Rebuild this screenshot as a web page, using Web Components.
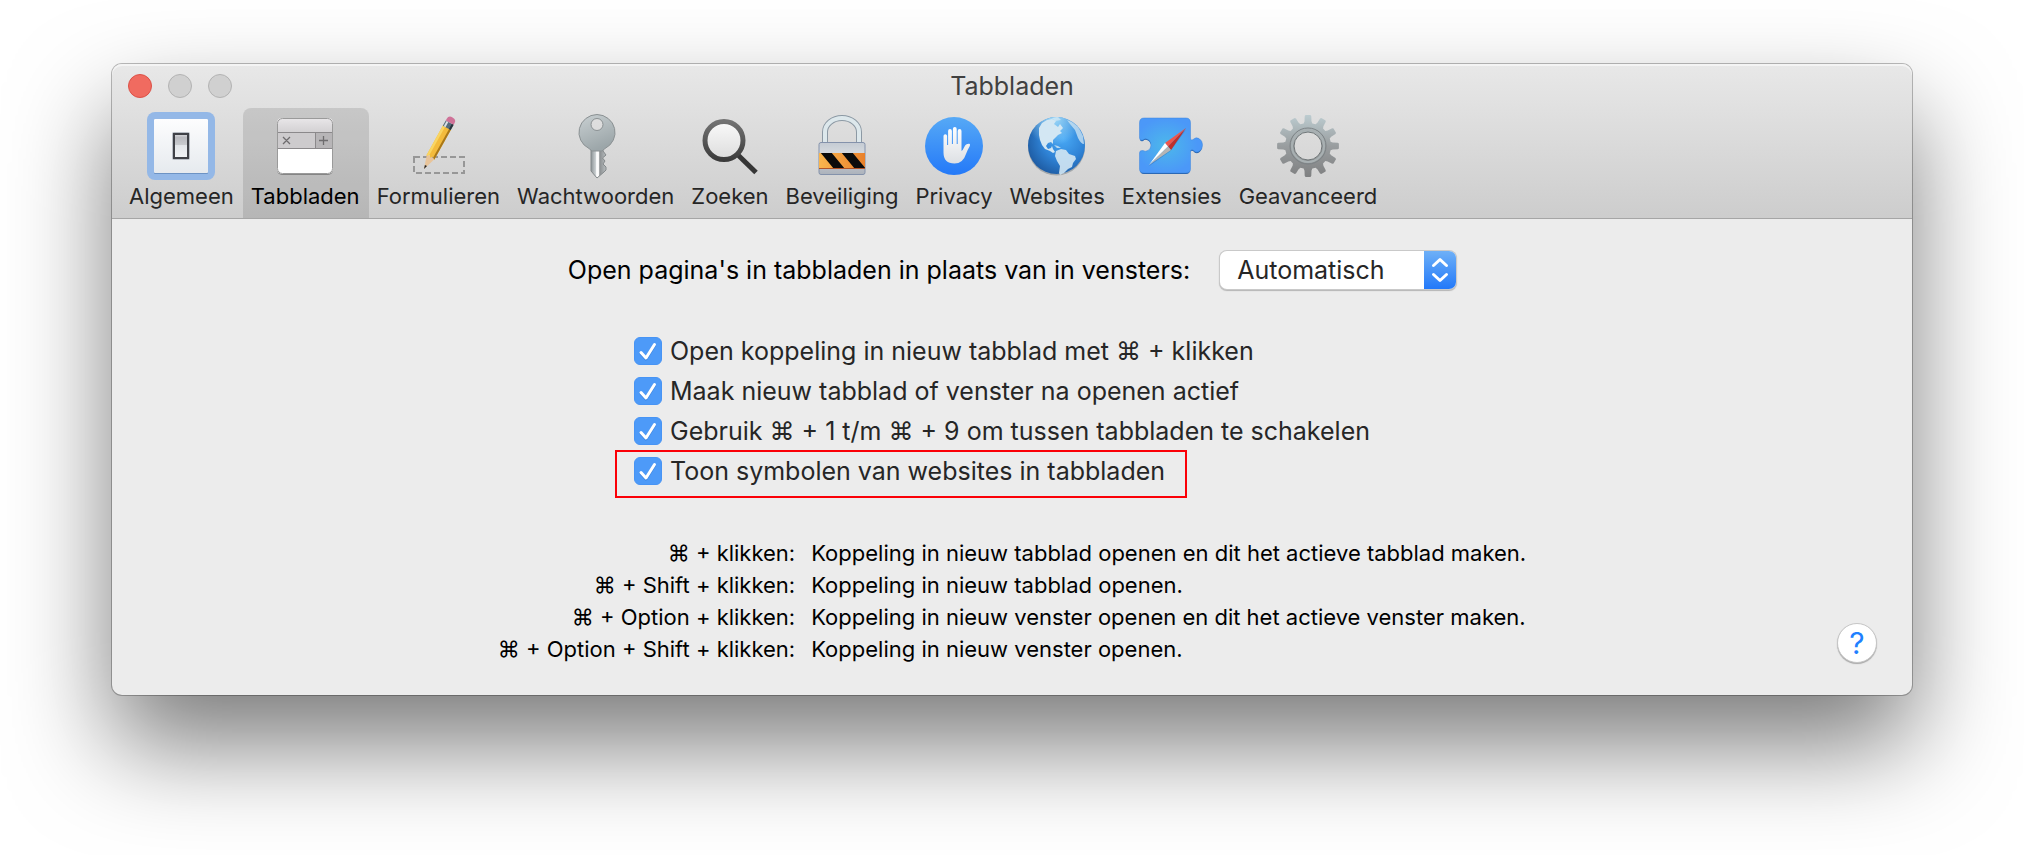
<!DOCTYPE html>
<html lang="nl">
<head>
<meta charset="utf-8">
<title>Tabbladen</title>
<style>
  body {
    margin: 0;
    padding: 64px 112px 160px;
    background: #fff;
    font-family: Inter, 'Open Sans', sans-serif;
    font-size: 25px;
    color: #262626;
  }
</style>
</head>
<body>

<prefs-window heading="Tabbladen">
  <toolbar-item slot="toolbar">
    <svg slot="icon" viewBox="0 0 64 64">
      <defs>
        <linearGradient id="plate" x2="0" y2="1"><stop stop-color="#fdfdfe"/><stop offset="1" stop-color="#e6eaee"/></linearGradient>
        <linearGradient id="rocker" x2="0" y2="1"><stop stop-color="#dcdde0"/><stop offset=".15" stop-color="#b9babf"/><stop offset=".45" stop-color="#c9cbcf"/><stop offset=".48" stop-color="#e3e6ea"/><stop offset="1" stop-color="#f1f3f5"/></linearGradient>
      </defs>
      <rect x="-2" y="-1" width="68" height="68" rx="8" fill="#94b8e7"/>
      <rect x="5" y="6" width="54" height="55" rx="1" fill="#6d93c4"/>
      <rect x="5" y="6" width="54" height="54" rx="1" fill="url(#plate)"/>
      <rect x="23" y="19" width="18" height="28" rx="2" fill="#b9bec5"/>
      <rect x="25" y="21" width="14" height="24" fill="url(#rocker)" stroke="#3f4147" stroke-width="2"/>
    </svg>
    Algemeen
  </toolbar-item>

  <toolbar-item slot="toolbar" selected>
    <svg slot="icon" viewBox="0 0 64 64">
      <defs>
        <linearGradient id="bar" x2="0" y2="1"><stop stop-color="#e9e7e9"/><stop offset="1" stop-color="#d3d1d3"/></linearGradient>
        <clipPath id="page"><rect x="4" y="5" width="56" height="56" rx="5"/></clipPath>
      </defs>
      <rect x="4" y="6" width="56" height="56" rx="5" fill="#858585"/>
      <g clip-path="url(#page)">
        <rect x="4" y="5" width="56" height="56" fill="#fff"/>
        <rect x="4" y="5" width="56" height="14" fill="url(#bar)"/>
        <rect x="4" y="19" width="56" height="17" fill="#cdcbcd"/>
        <rect x="43" y="19" width="17" height="17" fill="#b7b5b7"/>
        <path d="M4 19.500H60M4 35.500H60M42.500 19V36" stroke="#8b898b"/>
      </g>
      <rect x="4.500" y="5.500" width="55" height="55" rx="5" fill="none" stroke="#9a9a9a"/>
      <path d="M10 24l7 7M17 24l-7 7M46 27.500h9M50.500 23v9" stroke="#6e6c6e" stroke-width="1.300"/>
    </svg>
    Tabbladen
  </toolbar-item>

  <toolbar-item slot="toolbar">
    <svg slot="icon" viewBox="0 0 64 64">
      <rect x="8" y="44" width="50" height="16" fill="none" stroke="#979797" stroke-width="2" stroke-dasharray="6 3"/>
      <g transform="translate(18 56) rotate(29)">
        <path d="M0 0L-4.500 -14H4.500Z" fill="#e8c49a"/>
        <path d="M0 0L-1.200 -4H1.200Z" fill="#222"/>
        <path d="M-4.500 -13L-4.500 -48H4.500V-13L2 -15L0 -13L-2 -15Z" fill="#f3bb3c"/>
        <path d="M-4.500 -13V-48H-2V-14.500Z" fill="#f9d562"/>
        <path d="M4.500 -13V-48H2.500V-14.500Z" fill="#a87719"/>
        <rect x="-4.500" y="-53" width="9" height="6" fill="#556b7b"/>
        <path d="M-2.500 -53V-47" stroke="#d9e1e5" stroke-width="2"/>
        <path d="M3.500 -53V-47" stroke="#28343c" stroke-width="2"/>
        <path d="M-4.500 -53V-55Q-4.500 -59 0 -59T4.500 -55V-53Z" fill="#cf7298"/>
      </g>
    </svg>
    Formulieren
  </toolbar-item>

  <toolbar-item slot="toolbar">
    <svg slot="icon" viewBox="0 0 64 64">
      <defs>
        <linearGradient id="key" x2=".4" y2="1"><stop stop-color="#c9d0d2"/><stop offset="1" stop-color="#9ca6a9"/></linearGradient>
        <linearGradient id="blade"><stop stop-color="#8c9396"/><stop offset=".3" stop-color="#c9ced0"/><stop offset=".38" stop-color="#fff"/><stop offset=".52" stop-color="#f6f6f6"/><stop offset=".58" stop-color="#8b8f91"/><stop offset="1" stop-color="#b8bdbf"/></linearGradient>
      </defs>
      <path d="M27 36V58L33 65L40 59L42 57L42 54L39 51L41 48L38.500 45L42 42L39 38V36Z" fill="url(#blade)" stroke="#84898b"/>
      <path d="M33 1.500A18.500 18 0 0 1 41 35.500L38 38H28L25 35.500A18.500 18 0 0 1 33 1.500ZM33 5.500A6 6 0 0 0 33 17.500A6 6 0 0 0 33 5.500Z" fill="url(#key)" stroke="#8b9193" fill-rule="evenodd"/>
    </svg>
    Wachtwoorden
  </toolbar-item>

  <toolbar-item slot="toolbar">
    <svg slot="icon" viewBox="0 0 64 64">
      <defs>
        <linearGradient id="lens" x2="0" y2="1"><stop stop-color="#fafafa"/><stop offset="1" stop-color="#dcdcdc"/></linearGradient>
        <linearGradient id="rim" x2="0" y2="1"><stop stop-color="#737373"/><stop offset="1" stop-color="#3c3c3c"/></linearGradient>
      </defs>
      <path d="M40 42L58 59.500" stroke="#363636" stroke-width="5"/>
      <circle cx="26" cy="27.500" r="19" fill="url(#lens)" stroke="url(#rim)" stroke-width="5"/>
    </svg>
    Zoeken
  </toolbar-item>

  <toolbar-item slot="toolbar">
    <svg slot="icon" viewBox="0 0 64 64">
      <defs>
        <linearGradient id="steel" x2="0" y2="1"><stop stop-color="#c4cbd3"/><stop offset=".3" stop-color="#d4d8dd"/><stop offset="1" stop-color="#acb2bb"/></linearGradient>
        <linearGradient id="tape"><stop stop-color="#f9b54e"/><stop offset="1" stop-color="#e9812b"/></linearGradient>
        <clipPath id="band"><rect x="9" y="40" width="46" height="15"/></clipPath>
      </defs>
      <path d="M15 30V19A17 14 0 0 1 49 19V30" fill="none" stroke="#8c99a4" stroke-width="6"/>
      <path d="M15 30V19A17 14 0 0 1 49 19V30" fill="none" stroke="#dde8ec" stroke-width="4"/>
      <rect x="9" y="29.500" width="46" height="32" rx="2" fill="url(#steel)" stroke="#8492ab"/>
      <rect x="9" y="40" width="46" height="15" fill="url(#tape)"/>
      <path clip-path="url(#band)" d="M10 39H21L35 56H24ZM31 39H42L56 56H45Z" fill="#0b0b0b"/>
      <path d="M9 55.500H55" stroke="#b0552a"/>
    </svg>
    Beveiliging
  </toolbar-item>

  <toolbar-item slot="toolbar">
    <svg slot="icon" viewBox="0 0 64 64">
      <defs>
        <linearGradient id="disc" x2="0" y2="1"><stop stop-color="#56a9f6"/><stop offset="1" stop-color="#2479f8"/></linearGradient>
        <linearGradient id="palm" x2="0" y2="1"><stop stop-color="#fff"/><stop offset="1" stop-color="#dde0e4"/></linearGradient>
      </defs>
      <circle cx="32" cy="33" r="29" fill="url(#disc)"/>
      <path d="M21.500 23a1.800 1.800 0 0 1 3.600 0v9h1V18a1.900 1.900 0 0 1 3.800 0v13h1V16a1.900 1.900 0 0 1 3.800 0v15h1V18a1.900 1.900 0 0 1 3.800 0v20q1.500-1 2.800-4q1.600-3.500 5-3.200q1.300.4.500 2.200q-1.800 3-3.800 8q-3 9.500-11.500 9.500q-11 0-11-11Z" fill="url(#palm)"/>
    </svg>
    Privacy
  </toolbar-item>

  <toolbar-item slot="toolbar">
    <svg slot="icon" viewBox="0 0 64 64">
      <defs>
        <radialGradient id="sea" cx=".62" cy=".38" r=".68"><stop stop-color="#49a9f5"/><stop offset=".55" stop-color="#2f83d6"/><stop offset="1" stop-color="#1e5ba2"/></radialGradient>
        <radialGradient id="shine" cx=".45" cy="0" r=".5"><stop stop-color="#a7e0fb"/><stop offset="1" stop-color="#a7e0fb" stop-opacity="0"/></radialGradient>
      </defs>
      <circle cx="31.500" cy="34" r="28.500" fill="#a4a8ab"/>
      <circle cx="31.500" cy="32.500" r="28.500" fill="url(#sea)"/>
      <circle cx="31.500" cy="32.500" r="28.500" fill="url(#shine)"/>
      <g fill="#d3e7f3">
        <path d="M17 10L22 7L27 6L31 8L29 11L33 14L35 11L38 15L35 18L37 20L33 22L30 25L28 27L28 31L26 29L23 30L21 33L23 36L26 35L27 33L28 36L30 39L28 40L25 38L20 36L17 32L15 27L14 22L14 15Z"/>
        <path d="M27 5L33 4L36 7L30 8ZM42 7Q53 10 58 23L59 31Q56 31 53 25L50 17L45 11Z" opacity=".75"/>
        <path d="M29 32L33 33L36 35L32 35Z" opacity=".8"/>
        <path d="M31 38L36 36L41 37L44 41L50 43L51 46L48 50L47 54L43 56L39 60L35 62L34 60L35 53L32 48L30 43Z" opacity=".9"/>
      </g>
    </svg>
    Websites
  </toolbar-item>

  <toolbar-item slot="toolbar">
    <svg slot="icon" viewBox="0 0 64 64">
      <defs><radialGradient id="piece" cx=".42" r=".5"><stop stop-color="#4cb8ea"/><stop offset="1" stop-color="#4b98f8"/></radialGradient></defs>
      <path d="M4 6H46Q50 6 50 10V26Q50 29 53 27.500Q56 24.500 59 26.500Q62 28.500 62 33T59 39.500Q56 41.500 53 38Q50 37 50 40V57Q50 61 46 61H4Q0 61 0 57V41Q0 38 3 38.500Q5 40 8 38.500Q11 36.500 11 33T8 27.500Q5 26 3 28Q0 29 0 26V10Q0 6 4 6Z" fill="#245fa8"/>
      <path d="M4 5H46Q50.500 5 50.500 10V25Q50.500 28 53 26.500Q56 23.500 59 25.500Q62.500 27.500 62.500 32T59 38.500Q56 40.500 53 37Q50.500 36 50.500 39V56Q50.500 60 46 60H4Q-.500 60 -.500 56V40Q-.500 37 3 37.500Q5 39 8 37.500Q11 35.500 11 32T8 26.500Q5 25 3 27Q-.500 28 -.500 25V10Q-.500 5 4 5Z" fill="url(#piece)" stroke="#3c84dd" stroke-width=".500"/>
      <path d="M8.500 53.500L30.500 38L46 16.500Z" fill="#28518c" opacity=".35"/>
      <path d="M46 15L25 30L28 33.500Z" fill="#f0554b"/>
      <path d="M46 15L28 33.500L31 37Z" fill="#bf2f2b"/>
      <path d="M9 52L25 30L28 33.500Z" fill="#fff"/>
      <path d="M9 52L28 33.500L31 37Z" fill="#b5b5b5"/>
    </svg>
    Extensies
  </toolbar-item>

  <toolbar-item slot="toolbar">
    <svg slot="icon" viewBox="0 0 64 64">
      <defs>
        <linearGradient id="metal" gradientUnits="userSpaceOnUse" x1="0" y1="-31" x2="0" y2="31"><stop stop-color="#bcccd0"/><stop offset=".5" stop-color="#999d9f"/><stop offset="1" stop-color="#7f8081"/></linearGradient>
        <mask id="hole"><rect x="-40" y="-40" width="80" height="80" fill="#fff"/><circle r="14" fill="#000"/></mask>
      </defs>
      <g transform="translate(32 33)">
        <g mask="url(#hole)">
          <path id="teeth" fill="url(#metal)"/>
        </g>
        <circle r="18" fill="none" stroke="#7c8285"/>
        <circle r="16" fill="none" stroke="#a8b0b2" stroke-width="2"/>
        <circle r="14" fill="none" stroke="#6f7678"/>
      </g>
    </svg>
    Geavanceerd
  </toolbar-item>

  <pref-select>
    Open pagina's in tabbladen in plaats van in vensters:
    <option>Automatisch</option>
    <option>Nooit</option>
    <option>Altijd</option>
  </pref-select>

  <pref-group>
    <pref-checkbox checked>Open koppeling in nieuw tabblad met ⌘ + klikken</pref-checkbox>
    <pref-checkbox checked>Maak nieuw tabblad of venster na openen actief</pref-checkbox>
    <pref-checkbox checked>Gebruik ⌘ + 1 t/m ⌘ + 9 om tussen tabbladen te schakelen</pref-checkbox>
    <pref-checkbox checked marked>Toon symbolen van websites in tabbladen</pref-checkbox>
  </pref-group>

  <shortcut-table slot="notes"></shortcut-table>
  <help-button slot="help"></help-button>
</prefs-window>

<script>
function attach(el, html) {
  const root = el.attachShadow({ mode: 'open' });
  root.innerHTML = html;
  return root;
}

class PrefsWindow extends HTMLElement {
  connectedCallback() {
    attach(this, `
      <style>
        :host {
          display: block;
          border-radius: 10px;
          background: #ececec;
          box-shadow: 0 0 0 1px rgba(0, 0, 0, .26), 0 50px 100px rgba(0, 0, 0, .52);
        }
        header {
          border-bottom: 1px solid #a6a6a6;
          border-radius: 10px 10px 0 0;
          background: linear-gradient(#e8e8e8, #cdcdcd);
          box-shadow: inset 0 2px #f4f4f4;
        }
        .title {
          display: grid;
          grid-template-columns: 1fr auto 1fr;
          align-items: center;
          height: 44px;
          padding: 0 16px;
        }
        .lights {
          display: flex;
          gap: 16px;
        }
        .lights button {
          width: 24px;
          height: 24px;
          padding: 0;
          border: 1px solid #b3b3b3;
          border-radius: 50%;
          background: #d0d0d0;
        }
        .lights .close {
          border-color: #dc5147;
          background: #f06b60;
        }
        h1 {
          margin: 0;
          font-size: 25px;
          font-weight: 400;
          color: #404040;
        }
        nav {
          display: flex;
          padding: 0 9px;
        }
        main {
          display: flex;
          flex-direction: column;
          align-items: center;
          gap: 42px;
          padding: 32px 35px 30px;
        }
        footer {
          display: grid;
          grid-template-columns: 1fr auto 1fr;
          align-self: stretch;
          align-items: end;
          margin-top: 4px;
        }
        .help {
          grid-column: 3;
          justify-self: end;
          padding-bottom: 2px;
        }
      </style>
      <header>
        <div class="title">
          <div class="lights">
            <button class="close" aria-label="Sluit"></button>
            <button aria-label="Minimaliseer" disabled></button>
            <button aria-label="Vergroot" disabled></button>
          </div>
          <h1>${this.getAttribute('heading')}</h1>
        </div>
        <nav><slot name="toolbar"></slot></nav>
      </header>
      <main>
        <slot></slot>
        <footer>
          <span></span>
          <slot name="notes"></slot>
          <div class="help"><slot name="help"></slot></div>
        </footer>
      </main>
    `);
  }
}

class ToolbarItem extends HTMLElement {
  connectedCallback() {
    attach(this, `
      <style>
        :host { display: block; }
        button {
          display: flex;
          flex-direction: column;
          align-items: center;
          gap: 5px;
          padding: 5px 9px 8px 8px;
          border: 0;
          border-radius: 8px 8px 0 0;
          background: none;
          font: inherit;
          font-size: 22px;
          line-height: 28px;
          color: #262626;
        }
        :host([selected]) button {
          background: rgba(0, 0, 0, .11);
          color: #000;
        }
        ::slotted(svg) {
          display: block;
          width: 64px;
          height: 64px;
          overflow: visible;
        }
      </style>
      <button type="button"><slot name="icon"></slot><span><slot></slot></span></button>
    `);
  }
}

class PrefSelect extends HTMLElement {
  connectedCallback() {
    const options = [...this.querySelectorAll('option')];
    options.forEach(option => option.remove());

    const root = attach(this, `
      <style>
        :host {
          display: flex;
          align-items: center;
          gap: 30px;
        }
        label { color: #000; }
        .field {
          display: grid;
          grid-template-columns: 1fr 32px;
          width: 236px;
          height: 38px;
          border-radius: 7px;
          overflow: hidden;
          background: #fff;
          box-shadow: 0 0 0 1px #c9c9c9, 0 1px 1px 1px #b5b5b5;
        }
        select {
          grid-area: 1 / 1 / 2 / 3;
          appearance: none;
          padding: 0 17px;
          border: 0;
          background: none;
          font: inherit;
          color: #262626;
        }
        svg {
          grid-area: 1 / 2;
          background: linear-gradient(#6eb0f7, #2379f9);
          pointer-events: none;
        }
      </style>
      <label for="choice"><slot></slot></label>
      <div class="field">
        <select id="choice"></select>
        <svg viewBox="0 0 32 38" width="32" height="38" fill="none" stroke="#fff" stroke-width="3" stroke-linecap="round" stroke-linejoin="round">
          <path d="M9.500 14.500L16 8.500L22.500 14.500M9.500 23.500L16 29.500L22.500 23.500"/>
        </svg>
      </div>
    `);
    root.querySelector('select').append(...options);
  }
}

class PrefGroup extends HTMLElement {
  connectedCallback() {
    attach(this, `
      <style>
        :host {
          display: flex;
          flex-direction: column;
          align-items: flex-start;
          min-width: 756px;
        }
      </style>
      <slot></slot>
    `);
  }
}

class PrefCheckbox extends HTMLElement {
  connectedCallback() {
    const root = attach(this, `
      <style>
        :host {
          display: block;
          position: relative;
        }
        label {
          display: flex;
          align-items: center;
          gap: 8px;
          height: 40px;
        }
        .box {
          display: grid;
          width: 28px;
          height: 28px;
        }
        input, svg { grid-area: 1 / 1; }
        input {
          appearance: none;
          width: 28px;
          height: 28px;
          margin: 0;
          border: 1px solid #b9b9b9;
          border-radius: 6px;
          background: #fff;
        }
        input:checked {
          border-color: #4794f5;
          background: #4d9af8;
        }
        input:not(:checked) + svg { display: none; }
        svg { pointer-events: none; }
        /* red frame around the option that is being explained */
        :host([marked])::after {
          content: '';
          position: absolute;
          inset: -1px -22px -7px -19px;
          border: 2px solid #fb0007;
          pointer-events: none;
        }
      </style>
      <label>
        <span class="box">
          <input type="checkbox">
          <svg viewBox="0 0 28 28" fill="none" stroke-width="3" stroke-linecap="round" stroke-linejoin="round">
            <path d="M7 16.500L12 22L20.500 8.500" stroke="#3a82dc"/>
            <path d="M7 15.500L12 21L20.500 7.500" stroke="#fff"/>
          </svg>
        </span>
        <span><slot></slot></span>
      </label>
    `);
    root.querySelector('input').checked = this.hasAttribute('checked');
  }
}

const SHORTCUTS = [
  ['⌘ + klikken:', 'Koppeling in nieuw tabblad openen en dit het actieve tabblad maken.'],
  ['⌘ + Shift + klikken:', 'Koppeling in nieuw tabblad openen.'],
  ['⌘ + Option + klikken:', 'Koppeling in nieuw venster openen en dit het actieve venster maken.'],
  ['⌘ + Option + Shift + klikken:', 'Koppeling in nieuw venster openen.'],
];

class ShortcutTable extends HTMLElement {
  connectedCallback() {
    attach(this, `
      <style>
        :host { display: block; }
        table {
          border-collapse: collapse;
          font-size: 22px;
          line-height: 32px;
          color: #000;
        }
        th, td { padding: 0; }
        th {
          padding-right: 16px;
          font-weight: 400;
          text-align: right;
        }
      </style>
      <table>
        ${SHORTCUTS.map(([keys, text]) => `<tr><th scope="row">${keys}</th><td>${text}</td></tr>`).join('')}
      </table>
    `);
  }
}

class HelpButton extends HTMLElement {
  connectedCallback() {
    attach(this, `
      <style>
        :host { display: block; }
        button {
          width: 40px;
          height: 40px;
          padding: 0;
          border: 1px solid #c6c6c6;
          border-radius: 50%;
          background: #fff;
          box-shadow: 0 1px 1px #a8a8a8;
          font: inherit;
          font-size: 30px;
          line-height: 38px;
          color: #2080ff;
        }
      </style>
      <button type="button">?</button>
    `);
  }
}

// gear outline: twelve teeth on a ring
function gearPath(count, inner, outer) {
  const points = [];
  for (let i = 0; i < count; i++) {
    const mid = (i / count) * Math.PI * 2;
    for (const [r, offset] of [[inner, -.19], [inner + 2, -.14], [outer - 1, -.11], [outer, -.08], [outer, .08], [outer - 1, .11], [inner + 2, .14], [inner, .19]]) {
      points.push(`${(Math.sin(mid + offset) * r).toFixed(2)} ${(-Math.cos(mid + offset) * r).toFixed(2)}`);
    }
  }
  return `M${points.join('L')}Z`;
}
document.getElementById('teeth').setAttribute('d', gearPath(12, 23, 31));

customElements.define('prefs-window', PrefsWindow);
customElements.define('toolbar-item', ToolbarItem);
customElements.define('pref-select', PrefSelect);
customElements.define('pref-group', PrefGroup);
customElements.define('pref-checkbox', PrefCheckbox);
customElements.define('shortcut-table', ShortcutTable);
customElements.define('help-button', HelpButton);
</script>
</body>
</html>
